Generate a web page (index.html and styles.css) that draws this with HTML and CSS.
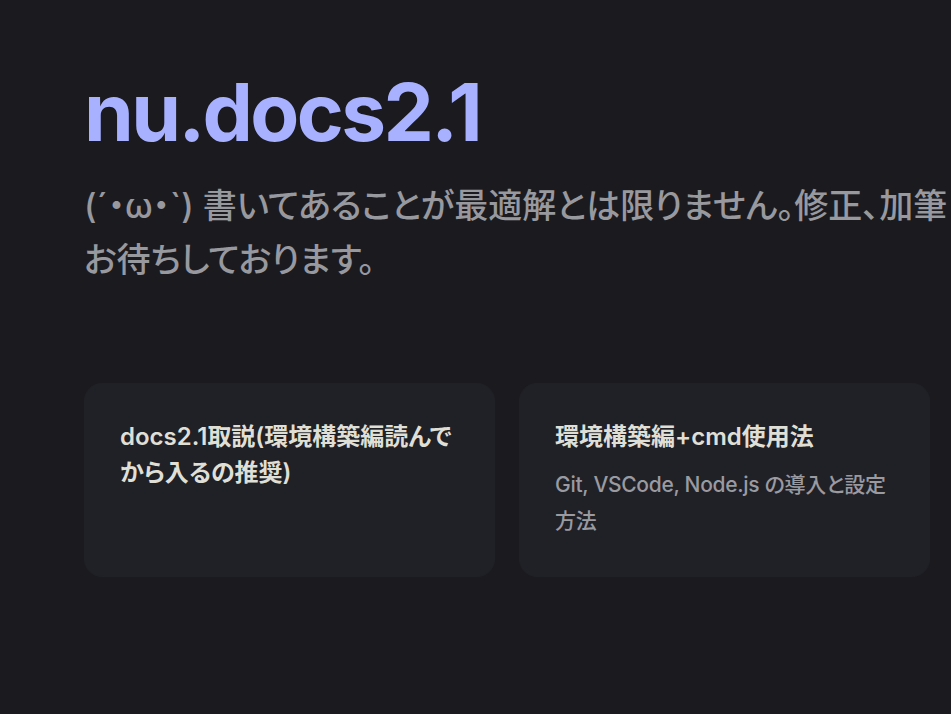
FILE: index.html
```html
<!DOCTYPE html>
<html lang="ja">
<head>
<meta charset="utf-8">
<title>nu.docs2.1</title>
<link rel="stylesheet" href="styles.css">
</head>
<body>
<div class="page">
  <section class="hero">
    <h1 class="name">nu.docs2.1</h1>
    <p class="tagline">(´・ω・`) 書いてあることが最適解とは限りません。修正、加筆お待ちしております。</p>
  </section>
  <section class="features">
    <a class="card" href="#">
      <h2 class="card-title">docs2.1取説(環境構築編読んでから入るの推奨)</h2>
    </a>
    <a class="card" href="#">
      <h2 class="card-title">環境構築編+cmd使用法</h2>
      <p class="card-details">Git, VSCode, Node.js の導入と設定方法</p>
    </a>
  </section>
</div>
</body>
</html>
```

FILE: styles.css
```css
html, body {
  margin: 0;
  padding: 0;
  background: #1b1b1f;
  overflow: hidden;
}

body {
  font-family: Inter, "Noto Sans CJK JP", sans-serif;
  font-feature-settings: "palt";
  -webkit-font-smoothing: antialiased;
}

.page {
  padding: 64px 0 0 84px;
}

.hero {
  padding-bottom: 96px;
}

.name {
  margin: 0;
  font-size: 80px;
  line-height: 96px;
  font-weight: 700;
  letter-spacing: -2.6px;
  color: #a8b1ff;
}

.tagline {
  margin: 19px 0 0;
  width: 864px;
  font-size: 34px;
  line-height: 54px;
  font-weight: 500;
  letter-spacing: 0;
  color: #98989f;
}

.features {
  display: flex;
  gap: 24px;
}

.card {
  display: block;
  box-sizing: border-box;
  width: 411px;
  height: 194px;
  flex: none;
  padding: 35px;
  border: 1px solid #202127;
  border-radius: 18px;
  background: #202127;
  text-decoration: none;
}

.card-title {
  margin: 0;
  font-size: 24px;
  line-height: 36px;
  font-weight: 600;
  color: #dfdfd6;
}

.card-details {
  margin: 0;
  padding-top: 12px;
  font-size: 21px;
  line-height: 36px;
  font-weight: 500;
  letter-spacing: -0.3px;
  color: #9a9aa0;
}
```
